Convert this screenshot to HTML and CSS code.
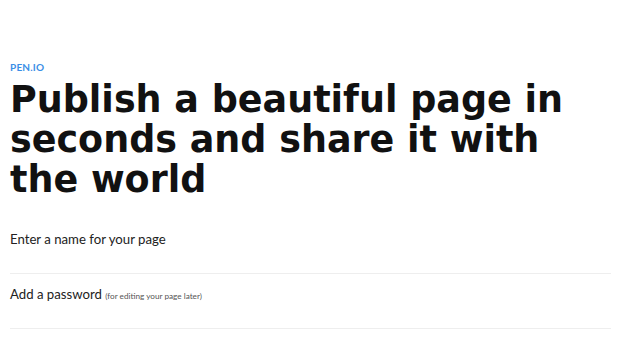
FILE: index.html
```html
<!DOCTYPE html>
<html>
<head>
<meta charset="utf-8">
<link rel="stylesheet" href="styles.css">
</head>
<body>
<main class="page">
  <div class="brand">PEN.IO</div>
  <h1 class="title">Publish a beautiful page in seconds and share it with the world</h1>
  <form class="form">
    <div class="field">
      <label class="label">Enter a name for your page</label>
    </div>
    <div class="field">
      <label class="label">Add a password <span class="hint">(for editing your page later)</span></label>
    </div>
  </form>
</main>
</body>
</html>
```
FILE: styles.css
```css
html, body {
  margin: 0;
  padding: 0;
  background: #ffffff;
}
.page {
  padding: 62px 9px 0 10px;
}
.brand {
  font-family: "Lato", "DejaVu Sans", sans-serif;
  font-weight: 700;
  font-size: 10px;
  line-height: 11px;
  color: #3a8ee6;
  letter-spacing: 0.2px;
}
.title {
  margin: 7px 0 0 0;
  font-family: "DejaVu Sans", sans-serif;
  font-weight: 700;
  font-size: 36.5px;
  line-height: 40px;
  color: #111111;
  max-width: 590px;
}
.form {
  margin-top: 19px;
}
.field {
  border-bottom: 1px solid #eeeeee;
  height: 55px;
  padding-top: 12px;
  box-sizing: border-box;
}
.label {
  font-family: "Lato", "DejaVu Sans", sans-serif;
  font-size: 13.2px;
  line-height: 16px;
  color: #222222;
  display: block;
}
.hint {
  font-size: 8.2px;
  color: #555555;
}
```
